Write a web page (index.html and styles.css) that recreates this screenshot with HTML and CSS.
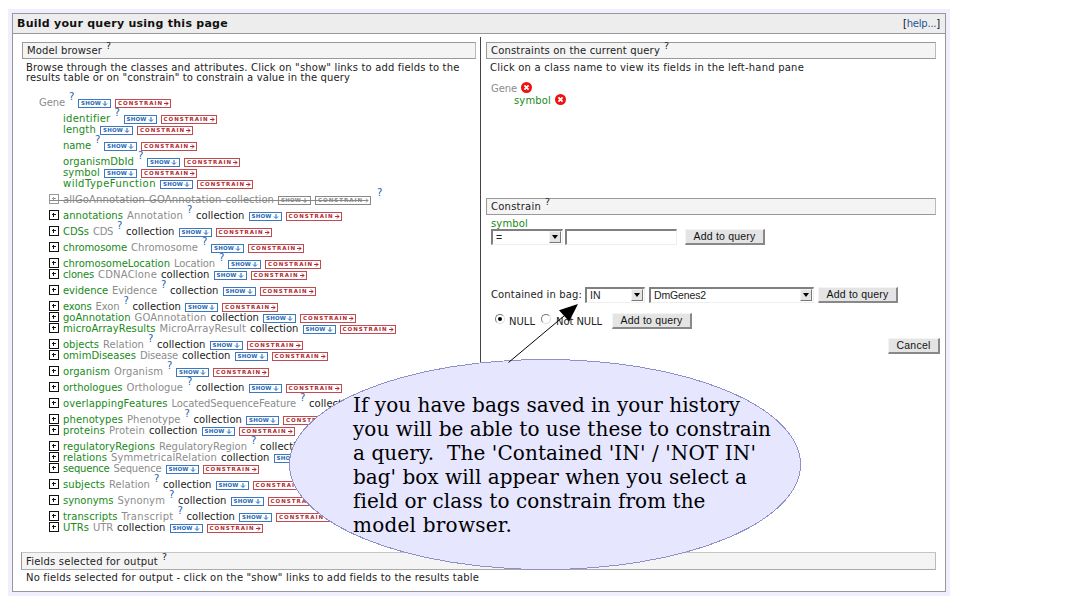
FILE: index.html
```html
<!DOCTYPE html>
<html lang="en">
<head>
<meta charset="utf-8">
<title>Query builder</title>
<link rel="stylesheet" href="styles.css">
</head>
<body>
<div class="frame">
  <div class="panel">
    <div class="titlebar"><b data-w="211">Build your query using this page</b><span class="help" data-w="37">[<a>help...</a>]</span></div>
    <div class="columns">
      <div class="left">
        <div class="heading"><span data-w="75">Model browser</span><sup>?</sup></div>
        <div class="desc"><span data-w="433.5">Browse through the classes and attributes. Click on "show" links to add fields to the</span><br><span data-w="324">results table or on "constrain" to constrain a value in the query</span></div>
        <div class="tree" id="tree"></div>
      </div>
      <div class="divider"></div>
      <div class="right">
        <div class="heading"><span data-w="169">Constraints on the current query</span><sup>?</sup></div>
        <div class="desc"><span data-w="314">Click on a class name to view its fields in the left-hand pane</span></div>
        <div class="current">
          <div class="item"><span class="cls" data-w="26">Gene</span><svg class="del" viewBox="0 0 11 11"><circle cx="5.5" cy="5.5" r="5.5"/><path d="M3.4 3.4l4.2 4.2M7.6 3.4L3.4 7.6"/></svg></div>
          <div class="item sub"><span class="name" data-w="37">symbol</span><svg class="del" viewBox="0 0 11 11"><circle cx="5.5" cy="5.5" r="5.5"/><path d="M3.4 3.4l4.2 4.2M7.6 3.4L3.4 7.6"/></svg></div>
        </div>
        <div class="heading"><span data-w="50">Constrain</span><sup>?</sup></div>
        <div class="field"><span class="name" data-w="37">symbol</span></div>
        <div class="form value">
          <div class="select op"><span>=</span><i class="arrow"></i></div>
          <div class="input"></div>
          <div class="button"><span data-w="62">Add to query</span></div>
        </div>
        <div class="form bag">
          <span class="baglabel" data-w="91">Contained in bag:</span>
          <div class="select in"><span>IN</span><i class="arrow"></i></div>
          <div class="select genes"><span data-w="52">DmGenes2</span><i class="arrow"></i></div>
          <div class="button"><span data-w="62">Add to query</span></div>
        </div>
        <div class="form nulls">
          <i class="radio on"></i><span class="null" data-w="26">NULL</span>
          <i class="radio"></i><span class="notnull" data-w="46">Not NULL</span>
          <div class="button"><span data-w="62">Add to query</span></div>
        </div>
        <div class="cancelrow"><div class="button cancel"><span data-w="34">Cancel</span></div></div>
      </div>
    </div>
    <div class="output">
      <div class="heading"><span data-w="132">Fields selected for output</span><sup>?</sup></div>
      <div class="desc"><span data-w="453">No fields selected for output - click on the "show" links to add fields to the results table</span></div>
    </div>
  </div>
</div>
<div class="callout">
  <svg class="bubble" viewBox="0 0 512 270" width="512" height="270">
    <ellipse cx="256" cy="167.5" rx="255.5" ry="105" fill="#e6e6ff" stroke="#9090c8" shape-rendering="crispEdges"/>
    <path d="M219.5 65.5L275 19" stroke="#000" fill="none"/>
    <path d="M289 7L270 13.2L280.2 24.5z" fill="#000"/>
  </svg>
  <div class="note">
    <span data-w="387">If you have bags saved in your history</span>
    <span data-w="418">you will be able to use these to constrain</span>
    <span data-w="403">a query.&nbsp; The 'Contained 'IN' / 'NOT IN'</span>
    <span data-w="394">bag' box will appear when you select a</span>
    <span data-w="352">field or class to constrain from the</span>
    <span data-w="159">model browser.</span>
  </div>
</div>
<script src="tree.js"></script>
</body>
</html>
```
FILE: styles.css
```css
* { box-sizing: border-box; }
body { margin: 0; background: #fff; font: 10px/10px "DejaVu Sans", sans-serif; color: #222; position: relative; width: 1067px; height: 608px; overflow: hidden; }
[data-w] { display: inline-block; white-space: nowrap; }
.frame { width: 950px; height: 595px; padding: 9px 0 0 9px; }
.panel { width: 934px; height: 579px; border: 1px solid #98989c; background: #fff; box-shadow: 0 0 0 4px #f1efff; margin: 4px 0 0 3px; }
.titlebar { height: 20px; background: #ededed; border-bottom: 1px solid #98989c; display: flex; justify-content: space-between; padding: 4px 5px 0 4px; color: #111; }
.titlebar b { font-size: 11px; line-height: 12px; }
.help { line-height: 11px; }
.help a { color: #1f5497; }
.columns { display: flex; height: 518px; }
.left { width: 454px; margin-left: 9px; padding-top: 8px; }
.divider { width: 1px; height: 480px; margin: 3px 5px 0 4px; background: #444; }
.right { width: 454px; padding-top: 8px; }
.heading { height: 17px; border: 1px solid #999; border-right-color: #bbb; background: #f4f4f4; padding: 3px 0 0 4px; display: flex; align-items: flex-start; gap: 4px; }
.right .heading { width: 450px; }
.heading sup { font-size: 9.5px; line-height: 8px; margin-top: -4px; }
.desc { padding: 4px 0 0 4px; }
.cls { color: #8c8c8c; }
.name { color: #188a18; }
.tree { padding: 9px 0 0 17px; }
.row { display: flex; align-items: flex-end; gap: 4px; height: 11px; padding-left: 24px; }
.row.tall { height: 16px; }
.row.root { padding-left: 0; }
.row.branch { padding-left: 10px; }
.row .t { height: 11px; line-height: 11px; flex: none; }
.row .q { align-self: flex-start; width: 5px; font-size: 10px; line-height: 8px; margin-top: 1px; color: #1f5fb0; flex: none; }
.plus { width: 10px; height: 10px; flex: none; margin-bottom: 1px; }
.plus path { fill: none; stroke: #111; }
.tag { height: 9px; border: 1px solid #3a78c4; color: #2465b5; display: flex; align-items: center; flex: none; padding-left: 2px; font-size: 5.5px; line-height: 7px; font-weight: bold; }
.tag.show { width: 33px; }
.tag.con { width: 56px; border-color: #c04b50; color: #b02a30; }
.tag svg { width: 6px; height: 5px; margin-left: 1px; flex: none; }
.tag path { fill: none; stroke: currentColor; }
.off { position: relative; }
.off .t, .off .tag { color: #888; border-color: #888; }
.off .plus path { stroke: #999; }
.off::after { content: ""; position: absolute; left: 10px; top: 11px; width: 318px; height: 1px; background: #888; }
.off .q { margin-left: 2px; margin-top: 0; }
.current { height: 125px; padding: 11px 0 0 5px; }
.item { display: flex; gap: 4px; height: 11px; align-items: flex-start; }
.item.sub { padding-left: 23px; margin-top: 1px; }
.del { width: 11px; height: 11px; margin-top: -2px; }
.del circle { fill: #f01010; }
.del path { stroke: #fff; stroke-width: 1.8; }
.field { padding: 4px 0 0 5px; height: 14px; }
.form { display: flex; padding-left: 5px; height: 16px; font-family: "Liberation Sans", sans-serif; font-size: 10.5px; }
.select, .input { height: 16px; border: solid; border-width: 2px 1px 1px 2px; border-color: #808080 #eee #eee #808080; background: #fff; display: flex; justify-content: space-between; padding: 0 1px 0 3px; line-height: 12px; }
.arrow { width: 12px; height: 12px; background: #e4e4e4; border: 1px solid; border-color: #f4f4f4 #777 #777 #f4f4f4; display: flex; align-items: center; justify-content: center; }
.arrow::after { content: ""; border: 3.5px solid transparent; border-top: 4px solid #000; border-bottom: 0; }
.op { width: 72px; }
.input { width: 112px; margin: 0 8px 0 2px; }
.button { width: 80px; height: 16px; background: #e4e4e4; border: solid; border-width: 1px 2px 2px 1px; border-color: #f4f4f4 #888 #888 #f4f4f4; display: flex; justify-content: center; font: 10.5px/13px "Liberation Sans", sans-serif; color: #111; }
.bag { margin-top: 42px; }
.baglabel, .null, .notnull { font: 10px/16px "DejaVu Sans", sans-serif; }
.in { width: 60px; margin: 0 4px 0 3px; }
.genes { width: 165px; margin-right: 4px; }
.nulls { margin-top: 10px; padding-left: 9px; }
.radio { width: 10px; height: 10px; border-radius: 50%; border: 1.5px solid; border-color: #777 #ddd #ddd #777; display: flex; align-items: center; justify-content: center; margin-top: 1px; }
.radio.on::after { content: ""; width: 4px; height: 4px; border-radius: 50%; background: #000; }
.null, .notnull { line-height: 17px; }
.null { margin: 0 6px 0 4px; }
.notnull { margin: 0 10px 0 5px; }
.cancelrow { display: flex; justify-content: flex-end; margin-top: 9px; }
.cancel { width: 52px; }
.output { padding-left: 8px; }
.output .heading { width: 915px; height: 18px; border-color: #c4c4c4 #bbb #aaa #999; padding-top: 4px; }
.output .desc { padding: 3px 0 0 5px; }
.callout { position: absolute; left: 289px; top: 297px; width: 512px; height: 270px; }
.bubble { display: block; overflow: visible; }
.note { position: absolute; left: 64px; top: 96px; display: flex; flex-direction: column; align-items: flex-start; font: 20px/24px "DejaVu Serif", serif; color: #000; }
```
FILE: tree.js
```js
// [kind, name, name width, class, class width, has help mark, is collection]
const rows = [
  ['root', '', 0, 'Gene', 26, 1, 0],
  ['leaf', 'identifier', 47.5, '', 0, 1, 0],
  ['leaf', 'length', 33, '', 0, 0, 0],
  ['leaf', 'name', 28, '', 0, 1, 0],
  ['leaf', 'organismDbId', 71, '', 0, 1, 0],
  ['leaf', 'symbol', 37, '', 0, 0, 0],
  ['leaf', 'wildTypeFunction', 93, '', 0, 0, 0],
  ['off', 'allGoAnnotation', 82, 'GOAnnotation', 72.5, 1, 1],
  ['branch', 'annotations', 60, 'Annotation', 56, 1, 1],
  ['branch', 'CDSs', 26, 'CDS', 20, 1, 1],
  ['branch', 'chromosome', 64, 'Chromosome', 67, 1, 0],
  ['branch', 'chromosomeLocation', 107, 'Location', 41, 1, 0],
  ['branch', 'clones', 31, 'CDNAClone', 59, 0, 1],
  ['branch', 'evidence', 45, 'Evidence', 45, 1, 1],
  ['branch', 'exons', 28.5, 'Exon', 24, 1, 1],
  ['branch', 'goAnnotation', 67.5, 'GOAnnotation', 72, 0, 1],
  ['branch', 'microArrayResults', 92.5, 'MicroArrayResult', 86.5, 0, 1],
  ['branch', 'objects', 36, 'Relation', 41, 1, 1],
  ['branch', 'omimDiseases', 73, 'Disease', 38, 0, 1],
  ['branch', 'organism', 47, 'Organism', 49, 1, 0],
  ['branch', 'orthologues', 59.5, 'Orthologue', 56.5, 1, 1],
  ['branch', 'overlappingFeatures', 104.5, 'LocatedSequenceFeature', 124.5, 1, 1],
  ['branch', 'phenotypes', 60, 'Phenotype', 53.5, 1, 1],
  ['branch', 'proteins', 42, 'Protein', 36, 0, 1],
  ['branch', 'regulatoryRegions', 92, 'RegulatoryRegion', 88, 1, 1],
  ['branch', 'relations', 44, 'SymmetricalRelation', 106, 0, 1],
  ['branch', 'sequence', 46.5, 'Sequence', 48, 0, 0],
  ['branch', 'subjects', 42, 'Relation', 41, 1, 1],
  ['branch', 'synonyms', 50.5, 'Synonym', 47.5, 1, 1],
  ['branch', 'transcripts', 54.5, 'Transcript', 52, 1, 1],
  ['branch', 'UTRs', 26, 'UTR', 20, 0, 1]
];
const text = (kind, s, w) => s ? `<span class="t ${kind}" data-w="${w}">${s}</span>` : '';
const plus = '<svg class="plus" viewBox="0 0 10 10" shape-rendering="crispEdges"><path d="M.5 .5h9v9h-9zM3 4.5h4M4.5 3v4"/></svg>';
const tags = '<span class="tag show"><span data-w="20">SHOW</span><svg viewBox="0 0 6 5"><path d="M3 0v4M1 2.5l2 2 2-2"/></svg></span>' +
  '<span class="tag con"><span data-w="45">CONSTRAIN</span><svg viewBox="0 0 6 5"><path d="M0 2.5h4M2 .5l2 2-2 2"/></svg></span>';
const mark = '<span class="q">?</span>';
document.getElementById('tree').innerHTML = rows.map(([kind, n, nw, c, cw, q, coll]) => {
  const off = kind === 'off';
  const cls = off ? 'branch off' : kind;
  return `<div class="row ${cls}${q ? ' tall' : ''}">` +
    (cls.startsWith('branch') ? plus : '') +
    text('name', n, nw) + text('cls', c, cw) +
    (q && !off ? mark : '') + (coll ? text('', 'collection', 48.5) : '') +
    tags + (off ? mark : '') + '</div>';
}).join('');

// Spread the letters of each label over its set width.
document.querySelectorAll('[data-w]').forEach(el => {
  const w = +el.dataset.w;
  const range = document.createRange();
  range.selectNodeContents(el);
  const natural = range.getBoundingClientRect().width;
  el.style.letterSpacing = (w - natural) / el.textContent.length + 'px';
  el.style.width = w + 'px';
});
```
